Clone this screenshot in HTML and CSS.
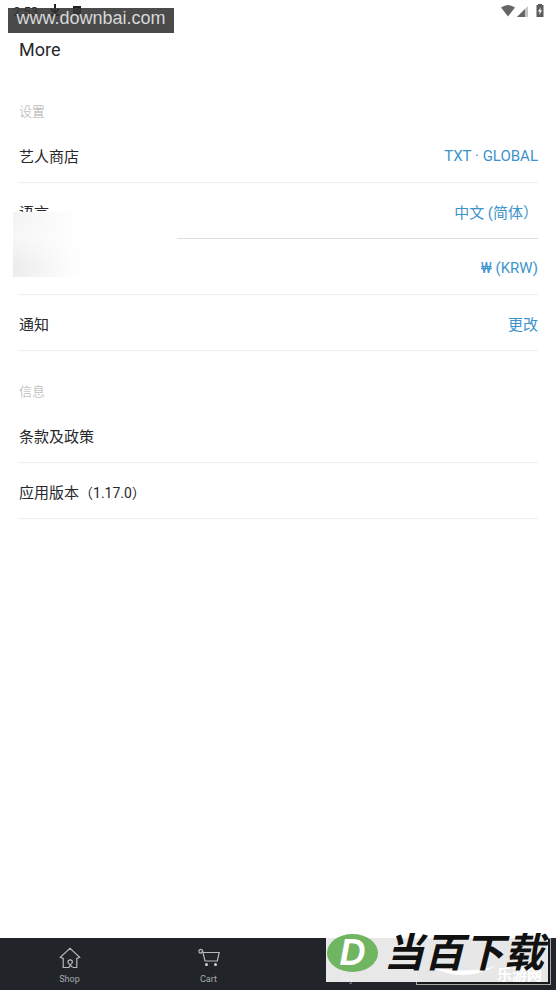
FILE: index.html
```html
<!DOCTYPE html>
<html lang="zh-CN">
<head>
<meta charset="utf-8">
<meta name="viewport" content="width=device-width, initial-scale=1">
<title>More</title>
<link rel="stylesheet" href="styles.css">
</head>
<body>
<header class="status">
  <div class="status-left">
    <span>2:53</span>
    <svg width="10" height="12" viewBox="0 0 10 12"><path d="M5 0v8M1 5l4 4 4-4M1 11h8" fill="none" stroke="#222" stroke-width="2"/></svg>
    <svg width="10" height="12" viewBox="0 0 10 12"><path d="M1 2h8v9H1z" fill="#222"/><path d="M3 9V5h4v4M3 7h4" fill="none" stroke="#777"/></svg>
  </div>
  <div class="status-right">
    <svg width="16" height="14" viewBox="0 0 16 14"><path d="M1 3.500Q8-1.500 15 3.500L8 12.500z" fill="#666"/></svg>
    <svg width="12" height="14" viewBox="0 0 12 14"><path d="M0 13L11 2v11z" fill="#c4c4c4"/><path d="M0 13L8 5v8z" fill="#666"/></svg>
    <svg class="battery" width="8" height="14" viewBox="0 0 8 14"><path d="M2 0h4v1h1.500V13H.5V1H2z" fill="#5c5c5c"/><path d="M4.800 3L2 7.500h1.700L3.300 11 6 6.300H4.300z" fill="#fff"/></svg>
  </div>
</header>
<div class="site-mark">www.downbai.com</div>
<main class="page">
  <h1>More</h1>
  <section>
    <h2>设置</h2>
    <ul class="rows">
      <li class="row"><span>艺人商店</span><a href="#">TXT · GLOBAL</a></li>
      <li class="row covered"><span>语言</span><a href="#">中文 (简体）</a></li>
      <li class="row"><span></span><a href="#">₩ (KRW)</a></li>
      <li class="row"><span>通知</span><a href="#">更改</a></li>
    </ul>
  </section>
  <section>
    <h2>信息</h2>
    <ul class="rows">
      <li class="row"><span>条款及政策</span></li>
      <li class="row"><span>应用版本<span class="version">（1.17.0）</span></span></li>
    </ul>
  </section>
</main>
<nav class="tabs">
  <a href="#" class="tab">
    <svg width="22" height="22" viewBox="0 0 22 22"><path d="M9.500 20.500H4.200V11.500L1.300 10.200 11 1.200 20.700 10.200 17.800 11.500V20.500H14.500C12.500 20.500 12 19.500 11.200 18 10.500 16.800 9 16.700 9 15a2.200 2.200 0 0 1 4.400 0C13.400 16.700 11.800 17 11 18.200 10.500 19.500 11 20.500 9 20.500"/></svg>
    <span>Shop</span>
  </a>
  <a href="#" class="tab">
    <svg width="22" height="22" viewBox="0 0 22 22"><path d="M4.500 5.500H21.200L19.300 14H7L4.600 3.800A1.900 1.900 0 1 0 2.600 6.200Q4.300 6 4.300 3.500"/><circle cx="8.500" cy="17.500" r="1.500" class="wheel"/><circle cx="17.500" cy="17.500" r="1.500" class="wheel"/></svg>
    <span>Cart</span>
  </a>
  <a href="#" class="tab"><svg width="22" height="22" viewBox="0 0 22 22"></svg><span>My</span></a>
  <a href="#" class="tab" aria-label="More"></a>
  <div class="frame"></div>
  <div class="brand">
    <span class="badge">D</span>
    <svg class="swoosh" width="120" height="24" viewBox="0 0 120 24"><path d="M8 8Q40 26 74 8Q40 17 8 8z" fill="#fff"/></svg>
    <span class="second">乐游网</span>
    <span class="brand-name">当百下载</span>
  </div>
</nav>
</body>
</html>
```
FILE: styles.css
```css
* {
  box-sizing: border-box;
}

body {
  margin: 0;
  min-height: 100vh;
  display: flex;
  flex-direction: column;
  background: #fff;
  color: #26282b;
  font-family: Roboto, "Noto Sans CJK SC", sans-serif;
  font-size: 15px;
}

h1, h2, ul {
  margin: 0;
  padding: 0;
  font-weight: 400;
}

a {
  color: #3c94cb;
  text-decoration: none;
}

.status {
  display: flex;
  justify-content: space-between;
  height: 24px;
  padding: 4px 12px 0 13px;
  font-size: 13px;
  line-height: 16px;
}

.status-left,
.status-right {
  display: flex;
}

.status-left {
  gap: 12px;
}

.status-right {
  gap: 1px;
}

.battery {
  margin-left: 6px;
}

.site-mark {
  position: absolute;
  left: 8px;
  top: 8px;
  width: 166px;
  height: 25px;
  background: rgba(50, 50, 50, 0.88);
  color: #d8d8d8;
  font: 18px/21px "Liberation Sans", sans-serif;
  text-align: center;
  white-space: nowrap;
}

.page {
  flex: 1;
  padding: 0 18px 0 19px;
}

h1 {
  padding: 14px 0;
  font-size: 18px;
  line-height: 24px;
}

h2 {
  padding: 26px 0 5px;
  color: #aaa;
  font-size: 13px;
  font-weight: 300;
  line-height: 20px;
}

section + section h2 {
  padding-top: 31px;
}

.rows {
  list-style: none;
}

.row {
  display: flex;
  align-items: center;
  justify-content: space-between;
  height: 56px;
  padding-top: 2px;
  border-bottom: 1px solid #eee;
}

.version {
  font-size: 14px;
}

.covered {
  position: relative;
  border-color: #dedede;
}

/* Soft patch that hides the left part of two rows */
.covered::after {
  content: "";
  position: absolute;
  left: -6px;
  top: 29px;
  width: 164px;
  height: 65px;
  background:
    linear-gradient(90deg, rgba(255, 255, 255, 0), #fefefe 62px),
    linear-gradient(#f3f3f3, #f7f7f7 40%, #ebebeb 85%, #eee);
}

.tabs {
  position: relative;
  display: grid;
  grid-template-columns: repeat(4, 1fr);
  height: 52px;
  background: #212429;
}

.tab {
  display: flex;
  flex-direction: column;
  align-items: center;
  padding-top: 9px;
  color: #a9abae;
  font-size: 9px;
  line-height: 20px;
}

.tab svg {
  flex: none;
  fill: none;
  stroke: #b7b9bc;
  stroke-width: 1.2;
}

.tab .wheel {
  fill: #d0d2d4;
  stroke: none;
}

.frame {
  position: absolute;
  right: 5px;
  bottom: 5px;
  width: 135px;
  height: 47px;
  border: 1px solid #a8a9aa;
  background: #17191c;
}

.brand {
  position: absolute;
  right: 8px;
  bottom: 8px;
  width: 222px;
  height: 44px;
  background: rgba(238, 238, 239, 0.97);
}

.badge {
  position: absolute;
  left: 1px;
  top: -4px;
  width: 51px;
  height: 38px;
  border-radius: 50%;
  background: #70b562;
  color: #fff;
  font: italic 700 36px/38px "Liberation Sans", sans-serif;
  text-align: center;
}

.swoosh {
  position: absolute;
  left: 96px;
  bottom: 0;
}

.second {
  position: absolute;
  right: 6px;
  bottom: -1px;
  color: #fff;
  font-size: 15px;
  font-weight: 700;
  line-height: 16px;
}

.brand-name {
  position: absolute;
  right: 4px;
  top: -8px;
  color: #111;
  font: italic 700 40px/40px "Noto Sans CJK SC", sans-serif;
  white-space: nowrap;
}
```
